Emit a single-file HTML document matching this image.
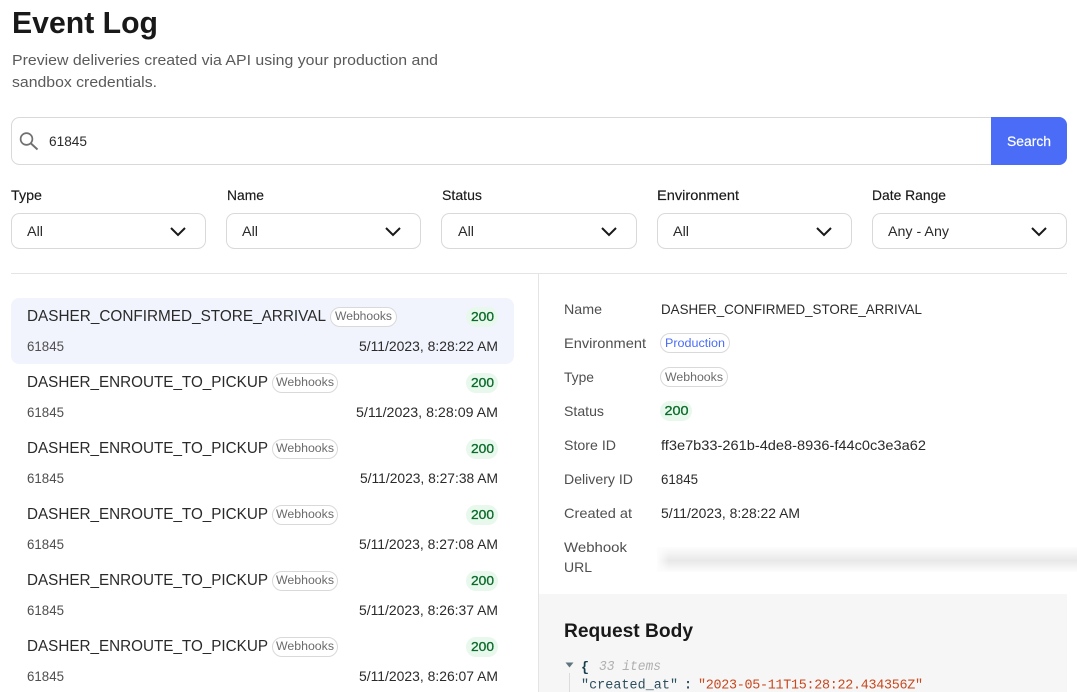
<!DOCTYPE html>
<html lang="en"><head><meta charset="utf-8"><title>Event Log</title>
<style>
html,body{margin:0;padding:0;background:#fff;width:1077px;height:692px;overflow:hidden}
svg{display:block;position:absolute;left:0;top:0}
text{font-family:"Liberation Sans",sans-serif;font-size:14px;fill:#191919;white-space:pre}
.l{fill:#4f4f4f}.sub{font-size:15px;fill:#5a5a5a}
.d{fill:#2a2a2a}.p{font-size:11.5px;fill:#6b6b6b}.g{font-size:13px;fill:#0b6b2b;stroke:#0b6b2b;stroke-width:.3}
.t{stroke:#191919;stroke-width:.15}
.n{font-size:15.5px;fill:#2a2a2a}
.m{font-family:"Liberation Mono",monospace;font-size:13.4px}
</style></head><body>
<svg width="1077" height="692" viewBox="0 0 1077 692" xmlns="http://www.w3.org/2000/svg">
<defs>
<linearGradient id="bv" x1="0" y1="0" x2="0" y2="1">
<stop offset="0" stop-color="#fdfdfd"/><stop offset=".25" stop-color="#f4f4f4"/><stop offset=".55" stop-color="#e8e8e8"/><stop offset=".8" stop-color="#f4f4f4"/><stop offset="1" stop-color="#fdfdfd"/>
</linearGradient>
<linearGradient id="fade" x1="0" y1="0" x2="1" y2="0">
<stop offset="0" stop-color="#fdfdfd"/><stop offset="1" stop-color="#fdfdfd" stop-opacity="0"/>
</linearGradient>
<g id="chev"><path d="M0 0L7 7L14 0" fill="none" stroke="#191919" stroke-width="2"/></g>
</defs>
<text x="12" y="33" style="font-size:31px;font-weight:bold" textLength="146" lengthAdjust="spacingAndGlyphs">Event Log</text>
<text class="sub" x="12" y="65" textLength="426" lengthAdjust="spacingAndGlyphs">Preview deliveries created via API using your production and</text>
<text class="sub" x="12" y="87" textLength="145" lengthAdjust="spacingAndGlyphs">sandbox credentials.</text>

<rect x="11.5" y="117.5" width="1055" height="47" rx="8" fill="#fff" stroke="#d9d9d9"/>
<path d="M991 117H1059a8 8 0 0 1 8 8V157a8 8 0 0 1-8 8H991Z" fill="#4a6cf7"/>
<text x="1007" y="146" style="fill:#fff;stroke:#fff;stroke-width:.2" textLength="44" lengthAdjust="spacingAndGlyphs">Search</text>
<circle cx="26.5" cy="139" r="5.9" fill="none" stroke="#707070" stroke-width="1.7"/>
<path d="M31 143.5L37.5 149.5" stroke="#707070" stroke-width="1.9" fill="none"/>
<text x="49" y="146" textLength="38" lengthAdjust="spacingAndGlyphs" class="d">61845</text>

<text class="t" x="11" y="200" textLength="31" lengthAdjust="spacingAndGlyphs">Type</text>
<text class="t" x="227" y="200" textLength="37" lengthAdjust="spacingAndGlyphs">Name</text>
<text class="t" x="442" y="200" textLength="40" lengthAdjust="spacingAndGlyphs">Status</text>
<text class="t" x="657" y="200" textLength="82" lengthAdjust="spacingAndGlyphs">Environment</text>
<text class="t" x="872" y="200" textLength="74" lengthAdjust="spacingAndGlyphs">Date Range</text>

<g fill="#fff" stroke="#d9d9d9">
<rect x="11.5" y="213.5" width="194" height="35" rx="8"/>
<rect x="226.5" y="213.5" width="194" height="35" rx="8"/>
<rect x="441.5" y="213.5" width="195" height="35" rx="8"/>
<rect x="657.5" y="213.5" width="194" height="35" rx="8"/>
<rect x="872.5" y="213.5" width="194" height="35" rx="8"/>
</g>
<text class="d" x="27" y="236" textLength="16" lengthAdjust="spacingAndGlyphs">All</text>
<text class="d" x="242" y="236" textLength="16" lengthAdjust="spacingAndGlyphs">All</text>
<text class="d" x="458" y="236" textLength="16" lengthAdjust="spacingAndGlyphs">All</text>
<text class="d" x="673" y="236" textLength="16" lengthAdjust="spacingAndGlyphs">All</text>
<text class="d" x="888" y="236" textLength="61" lengthAdjust="spacingAndGlyphs">Any - Any</text>
<use href="#chev" x="171" y="228"/><use href="#chev" x="386" y="228"/><use href="#chev" x="602" y="228"/><use href="#chev" x="817" y="228"/><use href="#chev" x="1032" y="228"/>

<rect x="11" y="273" width="1056" height="1" fill="#e4e4e4"/>
<rect x="538" y="274" width="1" height="418" fill="#e4e4e4"/>

<!-- list -->
<rect x="11" y="298" width="503" height="66" rx="8" fill="#f1f4fc"/>

<text x="27" y="321" class="n" textLength="299" lengthAdjust="spacingAndGlyphs">DASHER_CONFIRMED_STORE_ARRIVAL</text>
<rect x="330.5" y="307.5" width="66" height="19" rx="9.5" fill="#fff" stroke="#d9d9d9"/>
<text class="p" x="335" y="320" textLength="57" lengthAdjust="spacingAndGlyphs">Webhooks</text>
<rect x="466" y="307" width="32" height="20" rx="10" fill="#e8f8ec"/>
<text class="g" x="471" y="321" textLength="23" lengthAdjust="spacingAndGlyphs">200</text>
<text class="l" x="27" y="351" textLength="37" lengthAdjust="spacingAndGlyphs">61845</text>
<text class="d" x="359" y="351" textLength="139" lengthAdjust="spacingAndGlyphs">5/11/2023, 8:28:22 AM</text>

<text x="27" y="387" class="n" textLength="241" lengthAdjust="spacingAndGlyphs">DASHER_ENROUTE_TO_PICKUP</text>
<rect x="272.5" y="373.5" width="65" height="19" rx="9.5" fill="#fff" stroke="#d9d9d9"/>
<text class="p" x="276" y="386" textLength="58" lengthAdjust="spacingAndGlyphs">Webhooks</text>
<rect x="466" y="373" width="32" height="20" rx="10" fill="#e8f8ec"/>
<text class="g" x="471" y="387" textLength="23" lengthAdjust="spacingAndGlyphs">200</text>
<text class="l" x="27" y="417" textLength="37" lengthAdjust="spacingAndGlyphs">61845</text>
<text class="d" x="356" y="417" textLength="142" lengthAdjust="spacingAndGlyphs">5/11/2023, 8:28:09 AM</text>

<text x="27" y="453" class="n" textLength="241" lengthAdjust="spacingAndGlyphs">DASHER_ENROUTE_TO_PICKUP</text>
<rect x="272.5" y="439.5" width="65" height="19" rx="9.5" fill="#fff" stroke="#d9d9d9"/>
<text class="p" x="276" y="452" textLength="58" lengthAdjust="spacingAndGlyphs">Webhooks</text>
<rect x="466" y="439" width="32" height="20" rx="10" fill="#e8f8ec"/>
<text class="g" x="471" y="453" textLength="23" lengthAdjust="spacingAndGlyphs">200</text>
<text class="l" x="27" y="483" textLength="37" lengthAdjust="spacingAndGlyphs">61845</text>
<text class="d" x="360" y="483" textLength="138" lengthAdjust="spacingAndGlyphs">5/11/2023, 8:27:38 AM</text>

<text x="27" y="519" class="n" textLength="241" lengthAdjust="spacingAndGlyphs">DASHER_ENROUTE_TO_PICKUP</text>
<rect x="272.5" y="505.5" width="65" height="19" rx="9.5" fill="#fff" stroke="#d9d9d9"/>
<text class="p" x="276" y="518" textLength="58" lengthAdjust="spacingAndGlyphs">Webhooks</text>
<rect x="466" y="505" width="32" height="20" rx="10" fill="#e8f8ec"/>
<text class="g" x="471" y="519" textLength="23" lengthAdjust="spacingAndGlyphs">200</text>
<text class="l" x="27" y="549" textLength="37" lengthAdjust="spacingAndGlyphs">61845</text>
<text class="d" x="359" y="549" textLength="139" lengthAdjust="spacingAndGlyphs">5/11/2023, 8:27:08 AM</text>

<text x="27" y="585" class="n" textLength="241" lengthAdjust="spacingAndGlyphs">DASHER_ENROUTE_TO_PICKUP</text>
<rect x="272.5" y="571.5" width="65" height="19" rx="9.5" fill="#fff" stroke="#d9d9d9"/>
<text class="p" x="276" y="584" textLength="58" lengthAdjust="spacingAndGlyphs">Webhooks</text>
<rect x="466" y="571" width="32" height="20" rx="10" fill="#e8f8ec"/>
<text class="g" x="471" y="585" textLength="23" lengthAdjust="spacingAndGlyphs">200</text>
<text class="l" x="27" y="615" textLength="37" lengthAdjust="spacingAndGlyphs">61845</text>
<text class="d" x="359" y="615" textLength="139" lengthAdjust="spacingAndGlyphs">5/11/2023, 8:26:37 AM</text>

<text x="27" y="651" class="n" textLength="241" lengthAdjust="spacingAndGlyphs">DASHER_ENROUTE_TO_PICKUP</text>
<rect x="272.5" y="637.5" width="65" height="19" rx="9.5" fill="#fff" stroke="#d9d9d9"/>
<text class="p" x="276" y="650" textLength="58" lengthAdjust="spacingAndGlyphs">Webhooks</text>
<rect x="466" y="637" width="32" height="20" rx="10" fill="#e8f8ec"/>
<text class="g" x="471" y="651" textLength="23" lengthAdjust="spacingAndGlyphs">200</text>
<text class="l" x="27" y="681" textLength="37" lengthAdjust="spacingAndGlyphs">61845</text>
<text class="d" x="359" y="681" textLength="139" lengthAdjust="spacingAndGlyphs">5/11/2023, 8:26:07 AM</text>

<!-- details -->
<text class="l" x="564" y="314" textLength="38" lengthAdjust="spacingAndGlyphs">Name</text>
<text class="l" x="564" y="348" textLength="82" lengthAdjust="spacingAndGlyphs">Environment</text>
<text class="l" x="564" y="382" textLength="30" lengthAdjust="spacingAndGlyphs">Type</text>
<text class="l" x="564" y="416" textLength="40" lengthAdjust="spacingAndGlyphs">Status</text>
<text class="l" x="564" y="450" textLength="52" lengthAdjust="spacingAndGlyphs">Store ID</text>
<text class="l" x="564" y="484" textLength="69" lengthAdjust="spacingAndGlyphs">Delivery ID</text>
<text class="l" x="564" y="518" textLength="68" lengthAdjust="spacingAndGlyphs">Created at</text>
<text class="l" x="564" y="552" textLength="63" lengthAdjust="spacingAndGlyphs">Webhook</text>
<text class="l" x="564" y="572" textLength="28" lengthAdjust="spacingAndGlyphs">URL</text>

<text class="d" x="661" y="314" textLength="261" lengthAdjust="spacingAndGlyphs">DASHER_CONFIRMED_STORE_ARRIVAL</text>
<rect x="660.5" y="333.5" width="69" height="19" rx="9.5" fill="#fff" stroke="#d9d9d9"/>
<text class="p" x="665" y="347" style="fill:#4a6cf7" textLength="60" lengthAdjust="spacingAndGlyphs">Production</text>
<rect x="660.5" y="367.5" width="67" height="19" rx="9.5" fill="#fff" stroke="#d9d9d9"/>
<text class="p" x="665" y="381" textLength="58" lengthAdjust="spacingAndGlyphs">Webhooks</text>
<rect x="660" y="401" width="32" height="20" rx="10" fill="#e8f8ec"/>
<text class="g" x="664.5" y="415" textLength="24" lengthAdjust="spacingAndGlyphs">200</text>
<text class="d" x="661" y="450" textLength="265" lengthAdjust="spacingAndGlyphs">ff3e7b33-261b-4de8-8936-f44c0c3e3a62</text>
<text class="d" x="661" y="484" textLength="37" lengthAdjust="spacingAndGlyphs">61845</text>
<text class="d" x="661" y="518" textLength="139" lengthAdjust="spacingAndGlyphs">5/11/2023, 8:28:22 AM</text>

<!-- obscured webhook URL -->
<rect x="657" y="547" width="420" height="25" fill="url(#bv)"/>
<rect x="657" y="547" width="12" height="25" fill="url(#fade)"/>

<!-- request body -->
<rect x="539" y="594" width="528" height="98" fill="#f6f6f6"/>
<text x="564" y="637" style="font-size:19.5px;font-weight:bold" textLength="129" lengthAdjust="spacingAndGlyphs">Request Body</text>
<path d="M565.5 662.5H573.5L569.5 667.5Z" fill="#5f7680"/>
<text class="m" x="581" y="671" style="fill:#163f4c;font-weight:bold">{</text>
<text class="m" x="599" y="670" style="fill:#b0b0b0;font-style:italic" textLength="62" lengthAdjust="spacingAndGlyphs">33 items</text>
<rect x="569" y="673" width="1" height="19" fill="#dcdcdc"/>
<text class="m" x="581" y="688.5" style="fill:#2b4f5c" textLength="97" lengthAdjust="spacing">"created_at"</text>
<text class="m" x="684" y="688.5" style="fill:#2b4f5c;font-weight:bold">:</text>
<text class="m" x="698" y="688.5" style="fill:#c8481f" textLength="225" lengthAdjust="spacing">"2023-05-11T15:28:22.434356Z"</text>
</svg>
</body></html>
